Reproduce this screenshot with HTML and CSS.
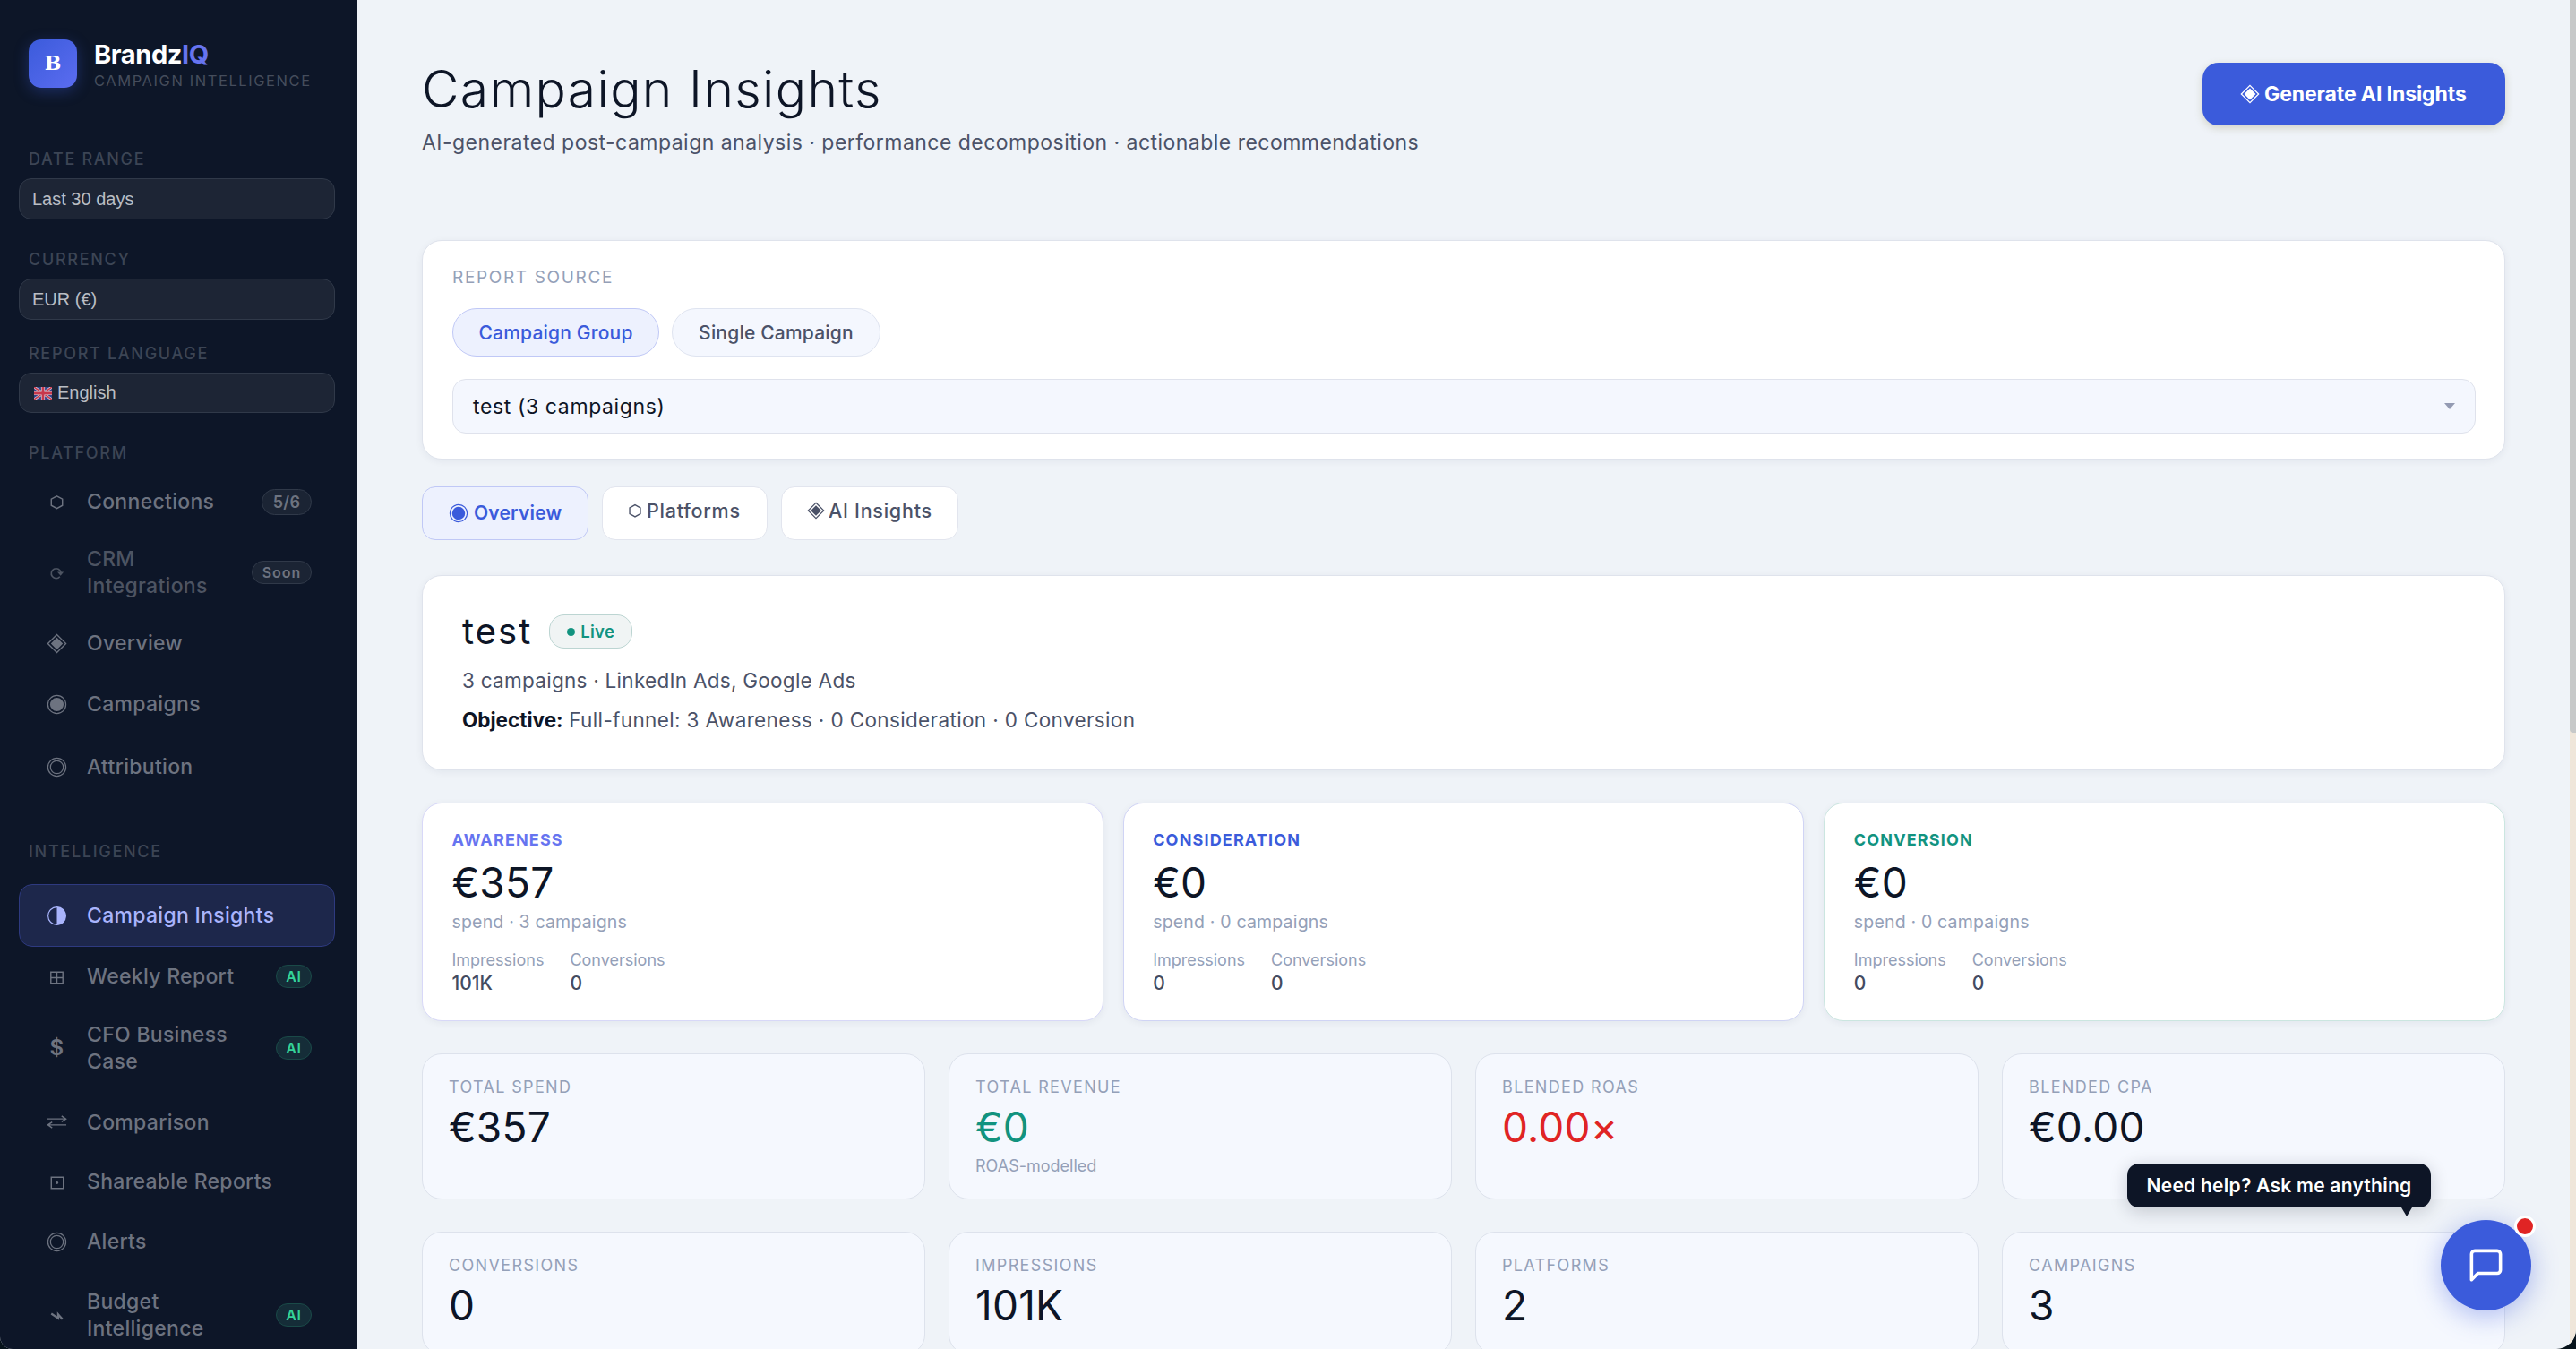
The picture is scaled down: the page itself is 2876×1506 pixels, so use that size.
FILE: index.html
```
<!DOCTYPE html>
<html lang="en">
    <head>
        <title>BrandzIQ - Campaign Insights</title>
        <meta charset="UTF-8">
        <meta name="viewport" content="width=device-width, initial-scale=1">
        <link rel="stylesheet" href="styles.css">
    </head>
    <body>
        <svg class="defs" width="0" height="0">
            <symbol id="i-hex" viewBox="0 0 24 24"><path d="M12 5l6.500 3.600v7.300L12 19.500l-6.500-3.600V8.600z" fill="none" stroke="currentColor" stroke-width="1.500"/></symbol>
            <symbol id="i-sync" viewBox="0 0 24 24"><path d="M15.500 16.500a5.700 5.700 0 1 1 1.200-5" fill="none" stroke="currentColor" stroke-width="1.700"/><path d="M12.500 11h7.500l-3.700 4.500z" fill="currentColor"/></symbol>
            <symbol id="i-diamond" viewBox="0 0 24 24"><path d="M12 1.500L22.500 12 12 22.500 1.500 12z" fill="none" stroke="currentColor" stroke-width="1.400"/><path d="M12 5l7 7-7 7-7-7z" fill="currentColor"/></symbol>
            <symbol id="i-fisheye" viewBox="0 0 24 24"><circle cx="12" cy="12" r="10.500" fill="none" stroke="currentColor" stroke-width="1.300"/><circle cx="12" cy="12" r="7.900" fill="currentColor"/></symbol>
            <symbol id="i-bullseye" viewBox="0 0 24 24"><circle cx="12" cy="12" r="10.500" fill="none" stroke="currentColor" stroke-width="1.300"/><circle cx="12" cy="12" r="7.500" fill="none" stroke="currentColor" stroke-width="1.300"/></symbol>
            <symbol id="i-half" viewBox="0 0 24 24"><circle cx="12" cy="12" r="10.300" fill="none" stroke="currentColor" stroke-width="1.200"/><path d="M12 1.500a10.500 10.500 0 0 1 0 21z" fill="currentColor"/></symbol>
            <symbol id="i-grid" viewBox="0 0 24 24"><path d="M5 6.500h14v13H5zM12 6.500v13M5 13h14" fill="none" stroke="currentColor" stroke-width="1.500"/></symbol>
            <symbol id="i-swap" viewBox="0 0 24 24"><path d="M1 8.500h21.500M17.500 5l5 3.500-5 3.300M23 15.500H1.500M6.500 12.200l-5 3.300 5 3.500" fill="none" stroke="currentColor" stroke-width="1.500"/></symbol>
            <symbol id="i-box" viewBox="0 0 24 24"><path d="M5.500 6.500h14v13h-14z" fill="none" stroke="currentColor" stroke-width="1.500"/><circle cx="12.200" cy="13" r="1.500" fill="currentColor"/></symbol>
            <symbol id="i-bolt" viewBox="0 0 24 24"><path d="M5.500 10l8 5.300v-4.500l5 5.700" fill="none" stroke="currentColor" stroke-width="2.400"/></symbol>
        </svg>

        <div class="app">
            <aside class="sidebar">
                <div class="brand">
                    <div class="brand-mark">B</div>
                    <div>
                        <div class="brand-name">Brandz<span>IQ</span></div>
                        <div class="brand-sub">Campaign Intelligence</div>
                    </div>
                </div>

                <div class="side-label">Date Range</div>
                <div class="side-select date">Last 30 days</div>
                <div class="side-label">Currency</div>
                <div class="side-select currency">EUR (€)</div>
                <div class="side-label">Report Language</div>
                <div class="side-select language">
                    <svg class="flag" viewBox="0 0 20 14"><rect width="20" height="14" fill="#33428a"/><path d="M0 0l20 14M20 0L0 14" stroke="#d5d3dc" stroke-width="3"/><path d="M0 0l20 14M20 0L0 14" stroke="#c8384c" stroke-width="1.500"/><path d="M10 0v14M0 7h20" stroke="#d5d3dc" stroke-width="4.200"/><path d="M10 0v14M0 7h20" stroke="#c8384c" stroke-width="2.800"/></svg>
                    English
                </div>

                <div class="side-label">Platform</div>
                <nav class="nav nav-platform">
                    <a class="nav-item"><svg><use href="#i-hex"/></svg><span>Connections</span><b class="count">5/6</b></a>
                    <a class="nav-item disabled"><svg><use href="#i-sync"/></svg><span>CRM Integrations</span><b class="soon">Soon</b></a>
                    <a class="nav-item"><svg><use href="#i-diamond"/></svg><span>Overview</span></a>
                    <a class="nav-item"><svg><use href="#i-fisheye"/></svg><span>Campaigns</span></a>
                    <a class="nav-item"><svg><use href="#i-bullseye"/></svg><span>Attribution</span></a>
                </nav>
                <hr>
                <div class="side-label">Intelligence</div>
                <nav class="nav nav-intel">
                    <a class="nav-item active"><svg><use href="#i-half"/></svg><span>Campaign Insights</span></a>
                    <a class="nav-item"><svg><use href="#i-grid"/></svg><span>Weekly Report</span><b class="ai">AI</b></a>
                    <a class="nav-item"><i>$</i><span>CFO Business Case</span><b class="ai">AI</b></a>
                    <a class="nav-item"><svg><use href="#i-swap"/></svg><span>Comparison</span></a>
                    <a class="nav-item"><svg><use href="#i-box"/></svg><span>Shareable Reports</span></a>
                    <a class="nav-item"><svg><use href="#i-bullseye"/></svg><span>Alerts</span></a>
                    <a class="nav-item"><svg><use href="#i-bolt"/></svg><span>Budget Intelligence</span><b class="ai">AI</b></a>
                </nav>
            </aside>

            <main class="main">
                <header class="page-head">
                    <div>
                        <h1>Campaign Insights</h1>
                        <p>AI-generated post-campaign analysis · performance decomposition · actionable recommendations</p>
                    </div>
                    <button class="generate"><svg><use href="#i-diamond"/></svg><span>Generate AI Insights</span></button>
                </header>

                <section class="card source">
                    <div class="source-label">Report Source</div>
                    <div class="pills">
                        <button class="pill selected">Campaign Group</button>
                        <button class="pill">Single Campaign</button>
                    </div>
                    <div class="select"><span>test (3 campaigns)</span><i class="caret"></i></div>
                </section>

                <div class="tabs">
                    <button class="tab t-overview selected"><svg><use href="#i-fisheye"/></svg><span>Overview</span></button>
                    <button class="tab t-platforms"><svg><use href="#i-hex"/></svg><span>Platforms</span></button>
                    <button class="tab t-insights"><svg><use href="#i-diamond"/></svg><span>AI Insights</span></button>
                </div>

                <section class="card group">
                    <div class="group-title"><h2>test</h2><span class="live"><i></i>Live</span></div>
                    <p class="group-meta">3 campaigns · LinkedIn Ads, Google Ads</p>
                    <p class="group-goal"><b>Objective:</b> <span>Full-funnel: 3 Awareness · 0 Consideration · 0 Conversion</span></p>
                </section>

                <div class="funnel">
                    <section class="card stage awareness">
                        <h3>Awareness</h3>
                        <div class="value">€357</div>
                        <div class="spend">spend · 3 campaigns</div>
                        <dl><div><dt>Impressions</dt><dd>101K</dd></div><div><dt>Conversions</dt><dd>0</dd></div></dl>
                    </section>
                    <section class="card stage consideration">
                        <h3>Consideration</h3>
                        <div class="value">€0</div>
                        <div class="spend">spend · 0 campaigns</div>
                        <dl><div><dt>Impressions</dt><dd>0</dd></div><div><dt>Conversions</dt><dd>0</dd></div></dl>
                    </section>
                    <section class="card stage conversion">
                        <h3>Conversion</h3>
                        <div class="value">€0</div>
                        <div class="spend">spend · 0 campaigns</div>
                        <dl><div><dt>Impressions</dt><dd>0</dd></div><div><dt>Conversions</dt><dd>0</dd></div></dl>
                    </section>
                </div>

                <div class="kpis">
                    <div class="kpi"><h4>Total Spend</h4><div class="value">€357</div></div>
                    <div class="kpi"><h4>Total Revenue</h4><div class="value good">€0</div><small>ROAS-modelled</small></div>
                    <div class="kpi"><h4>Blended ROAS</h4><div class="value bad">0.00×</div></div>
                    <div class="kpi"><h4>Blended CPA</h4><div class="value">€0.00</div></div>
                    <div class="kpi"><h4>Conversions</h4><div class="value">0</div></div>
                    <div class="kpi"><h4>Impressions</h4><div class="value">101K</div></div>
                    <div class="kpi"><h4>Platforms</h4><div class="value">2</div></div>
                    <div class="kpi"><h4>Campaigns</h4><div class="value">3</div></div>
                </div>
            </main>
            <div class="scrollbar"><div class="thumb"></div></div>
        </div>

        <div class="help-tip">Need help? Ask me anything</div>
        <button class="chat">
            <svg viewBox="0 0 24 24"><path d="M21 15a2 2 0 0 1-2 2H7l-4 4V5a2 2 0 0 1 2-2h14a2 2 0 0 1 2 2z" fill="none" stroke="#fff" stroke-width="2" stroke-linecap="round" stroke-linejoin="round"/></svg>
            <i class="chat-dot"></i>
        </button>
    </body>
</html>
```
FILE: styles.css
```
* {
    box-sizing: border-box;
}

body {
    margin: 0;
    height: 1506px;
    overflow: hidden;
    position: relative;
    background: #07131b;
    color: #0d1526;
    font-family: Inter, "Liberation Sans", sans-serif;
}

h1, h2, h3, h4, p, dl, dd {
    margin: 0;
}

button {
    font-family: inherit;
    border: 0;
    padding: 0;
    white-space: nowrap;
}

i {
    font-style: normal;
}

.defs {
    position: absolute;
}

.app {
    display: flex;
    height: 1506px;
    overflow: hidden;
    border-radius: 0 0 22px 14px;
    background: #eff3f8;
}

/* sidebar */

.sidebar {
    flex: none;
    width: 399px;
    height: 1506px;
    padding: 44px 25px 0 21px;
    overflow: hidden;
    background: #0d1628;
    color: #6d7380;
    white-space: nowrap;
}

.brand {
    display: flex;
    gap: 19px;
    height: 120px;
    padding-left: 11px;
}

.brand-mark {
    width: 54px;
    height: 54px;
    border-radius: 14px;
    background: linear-gradient(135deg, #3b5bdb, #5b6cf0);
    box-shadow: 0 4px 16px rgba(59, 91, 219, .35);
    color: #fff;
    font: 700 22px/53px "DejaVu Serif", serif;
    text-align: center;
}

.brand-name {
    color: #fff;
    font-size: 29px;
    font-weight: 700;
    line-height: 34px;
    letter-spacing: -.4px;
}

.brand-name span {
    color: #6674f0;
}

.brand-sub {
    margin-top: 3px;
    color: #454d5c;
    font-size: 16.500px;
    line-height: 19px;
    letter-spacing: 1.570px;
    text-transform: uppercase;
}

.side-label {
    height: 35px;
    padding-left: 11px;
    color: #3c4555;
    font-size: 18px;
    font-weight: 500;
    line-height: 28px;
    letter-spacing: 1.700px;
    text-transform: uppercase;
}

.side-select {
    height: 46px;
    padding-left: 14px;
    border: 1px solid #303949;
    border-radius: 14px;
    background: #1d2535;
    color: #b9bdc4;
    font: 20px/45px "Liberation Sans", Arial, sans-serif;
}

.side-select.date {
    margin-bottom: 31px;
}

.side-select.currency {
    margin-bottom: 24px;
}

.side-select.language {
    display: flex;
    align-items: center;
    gap: 6px;
    height: 45px;
    margin-bottom: 31px;
    padding-left: 16px;
}

.flag {
    width: 20px;
    height: 14px;
}

.nav {
    display: grid;
}

.nav-platform {
    grid-template-rows: 68px 90px 68px 68px 72px;
    margin-top: -1px;
}

.nav-intel {
    grid-template-rows: 70px 66px 93px 73px 60px 74px 90px;
    margin-top: 15px;
}

.nav-item {
    display: flex;
    align-items: center;
    padding: 0 25px 0 30px;
    border: 1px solid transparent;
    border-radius: 15px;
    font-size: 23px;
    font-weight: 500;
    line-height: 30px;
    letter-spacing: .3px;
}

.nav-item svg,
.nav-item i {
    flex: none;
    width: 23px;
    height: 23px;
    margin-right: 22px;
}

.nav-item i {
    font-weight: 600;
    font-size: 24px;
    line-height: 23px;
    text-align: center;
}

.nav-item span {
    flex: 1;
    white-space: normal;
}

.nav-item.active {
    border-color: #2e3a80;
    background: #1d274b;
    color: #a9b4fc;
}

.nav-item.disabled {
    color: #4d5462;
}

.nav-item b {
    flex: none;
    border: 1px solid #303949;
    border-radius: 15px;
    background: #1b2434;
    color: #6d7380;
    font-weight: 600;
    text-align: center;
}

.nav-item b.count {
    width: 56px;
    font-size: 18px;
    line-height: 27px;
}

.nav-item b.soon {
    width: 67px;
    font-size: 16px;
    line-height: 24px;
    letter-spacing: 1px;
}

.nav-item b.ai {
    width: 40px;
    border-color: #1a4a48;
    background: #152d38;
    color: #34d399;
    font-size: 16px;
    line-height: 24px;
    letter-spacing: .8px;
}

.sidebar hr {
    height: 1px;
    margin: 24px -1px 20px;
    border: 0;
    background: #1d2635;
}

/* page */

.main {
    flex: 1;
    padding: 0 72px;
}

.page-head {
    display: flex;
    justify-content: space-between;
    height: 268px;
    padding-top: 70px;
}

h1 {
    font-size: 57px;
    font-weight: 300;
    line-height: 60px;
    letter-spacing: 1.350px;
}

.page-head p {
    margin-top: 13px;
    color: #4b5268;
    font-size: 23px;
    line-height: 32px;
    letter-spacing: .470px;
}

.generate {
    display: flex;
    align-items: center;
    width: 338px;
    height: 70px;
    padding-left: 42px;
    border-radius: 18px;
    background: #3b5bdb;
    box-shadow: 0 3px 10px rgba(110, 100, 30, .22);
    color: #fff;
    font-size: 23px;
    font-weight: 700;
    letter-spacing: -.1px;
}

.generate svg {
    width: 22px;
    height: 22px;
    margin-right: 5px;
}

.card {
    border: 1px solid #dfe3ec;
    border-radius: 22px;
    background: #fff;
    box-shadow: 0 2px 8px rgba(20, 30, 60, .06);
}

.source {
    height: 245px;
    padding: 26px 32px 0 33px;
}

.source-label {
    color: #94a0b8;
    font-size: 19px;
    line-height: 30px;
    letter-spacing: 1.650px;
    text-transform: uppercase;
}

.pills {
    display: flex;
    gap: 14px;
    margin-top: 19px;
}

.pill {
    width: 233px;
    height: 54px;
    border: 1px solid #dfe4f0;
    border-radius: 27px;
    background: #f4f7fe;
    color: #4b5268;
    font-size: 21px;
    font-weight: 500;
    letter-spacing: .200px;
}

.pill.selected {
    width: 231px;
    border-color: #c0c8f6;
    background: #edf1fe;
    color: #3b5bdb;
}

.select {
    display: flex;
    align-items: center;
    justify-content: space-between;
    height: 61px;
    margin-top: 25px;
    padding: 0 22px;
    border: 1px solid #dfe2ec;
    border-radius: 15px;
    background: #f4f7fe;
    font-size: 23px;
    letter-spacing: .620px;
}

.caret {
    border: 6px solid transparent;
    border-top: 7px solid #949bb3;
    border-bottom: 0;
}

.tabs {
    display: flex;
    gap: 15px;
    margin-top: 30px;
}

.tab {
    display: flex;
    align-items: center;
    height: 60px;
    padding-left: 29px;
    padding-bottom: 6px;
    border: 1px solid #e2e5ee;
    border-radius: 15px;
    background: #fff;
    color: #4b5268;
    font-size: 21.500px;
    font-weight: 500;
    letter-spacing: .750px;
}

.tab svg {
    width: 22px;
    height: 22px;
    margin-right: 6px;
}

.tab.selected {
    padding-bottom: 1px;
    border-color: #c0c8f6;
    background: #edf1fe;
    color: #3b5bdb;
    font-size: 21px;
    font-weight: 600;
    letter-spacing: .200px;
}

.t-overview {
    width: 186px;
}

.t-platforms {
    width: 185px;
    padding-left: 25px;
}

.t-platforms svg {
    margin-right: 2px;
}

.t-insights {
    width: 198px;
    padding-left: 28px;
}

.t-insights svg {
    width: 20px;
    height: 20px;
    margin-right: 4px;
}

.group {
    height: 218px;
    margin-top: 39px;
    padding: 39px 44px 0;
}

.group-title {
    display: flex;
    align-items: center;
    gap: 19px;
    height: 46px;
}

.group h2 {
    font-size: 40px;
    font-weight: 400;
    line-height: 44px;
    letter-spacing: 2px;
}

.live {
    display: flex;
    align-items: center;
    gap: 6px;
    width: 93px;
    height: 38px;
    padding-left: 19px;
    border: 1px solid #bcd5d2;
    border-radius: 17px;
    background: #f0f4f4;
    color: #12937f;
    font-size: 18.500px;
    font-weight: 600;
    letter-spacing: .300px;
}

.live i {
    width: 9px;
    height: 9px;
    border-radius: 50%;
    background: #12937f;
}

.group p {
    color: #4b5268;
    font-size: 22.500px;
    line-height: 44px;
    letter-spacing: .270px;
}

.group-meta {
    margin-top: 10px;
}

.group-goal b {
    color: #0d1526;
}

.group-goal b {
    letter-spacing: 0;
}

.group-goal span {
    letter-spacing: .360px;
}

.value {
    font-size: 46px;
    line-height: 56px;
    letter-spacing: .200px;
}

.funnel {
    display: grid;
    grid-template-columns: repeat(3, 1fr);
    gap: 22px;
    margin-top: 36px;
}

.stage {
    height: 244px;
    padding: 26px 32.500px 0;
}

.stage h3 {
    font-size: 18px;
    line-height: 30px;
    letter-spacing: 1.150px;
    text-transform: uppercase;
}

.awareness {
    border-color: #d8d8f8;
}

.awareness h3 {
    color: #6674f0;
}

.consideration {
    border-color: #d0d4f5;
}

.consideration h3 {
    color: #3b5bdb;
}

.conversion {
    border-color: #cbe6e0;
}

.conversion h3 {
    color: #12937f;
}

.stage .value {
    margin-top: 4px;
}

.stage .spend {
    color: #94a0b8;
    font-size: 19.500px;
    line-height: 28px;
    margin-top: 2px;
    letter-spacing: .180px;
}

.stage dl {
    display: flex;
    gap: 29px;
    margin-top: 18px;
}

.stage dt {
    color: #94a0b8;
    font-size: 18px;
    line-height: 22px;
}

.stage dd {
    margin-top: 1px;
    color: #434b61;
    font-size: 21px;
    font-weight: 500;
    line-height: 27px;
}

.kpis {
    display: grid;
    grid-template-columns: repeat(4, 1fr);
    grid-template-rows: 163px 137px;
    gap: 36px 26px;
    margin-top: 36px;
}

.kpi {
    padding: 22px 29px 0;
    border: 1px solid #dde2ec;
    border-radius: 22px;
    background: #f5f8fe;
}

.kpi h4 {
    color: #94a0b8;
    font-size: 18px;
    font-weight: 400;
    line-height: 30px;
    letter-spacing: 1.350px;
    text-transform: uppercase;
}

.kpi .value {
    margin-top: 1px;
}

.kpi .good {
    color: #12937f;
}

.kpi .bad {
    color: #e02424;
}

.kpi small {
    display: block;
    margin-top: 4px;
    color: #94a0b8;
    font-size: 18px;
    line-height: 24px;
}

.scrollbar {
    flex: none;
    width: 7px;
    background: #efe6da;
}

.thumb {
    height: 818px;
    border-radius: 0 0 0 4px;
    background: #c7c9c9;
}

/* floating help */

.help-tip {
    position: absolute;
    left: 2375px;
    top: 1299px;
    width: 339px;
    height: 49px;
    border-radius: 13px;
    background: #0d1526;
    box-shadow: 0 4px 20px rgba(13, 21, 38, .2);
    color: #fff;
    font-size: 21px;
    font-weight: 600;
    line-height: 49px;
    letter-spacing: .250px;
    text-align: center;
}

.help-tip::after {
    content: "";
    position: absolute;
    right: 21px;
    top: 49px;
    border: 6px solid transparent;
    border-top: 10px solid #0d1526;
    border-bottom: 0;
}

.chat {
    position: absolute;
    left: 2725px;
    top: 1362px;
    width: 101px;
    height: 101px;
    border-radius: 50%;
    background: #3b5bdb;
    box-shadow: 0 6px 30px rgba(59, 91, 219, .4);
}

.chat svg {
    display: block;
    width: 43px;
    height: 43px;
    margin: 0 auto;
}

.chat-dot {
    position: absolute;
    right: -5px;
    top: -5px;
    width: 24px;
    height: 24px;
    border: 3px solid #fff;
    border-radius: 50%;
    background: #e02424;
}
```
